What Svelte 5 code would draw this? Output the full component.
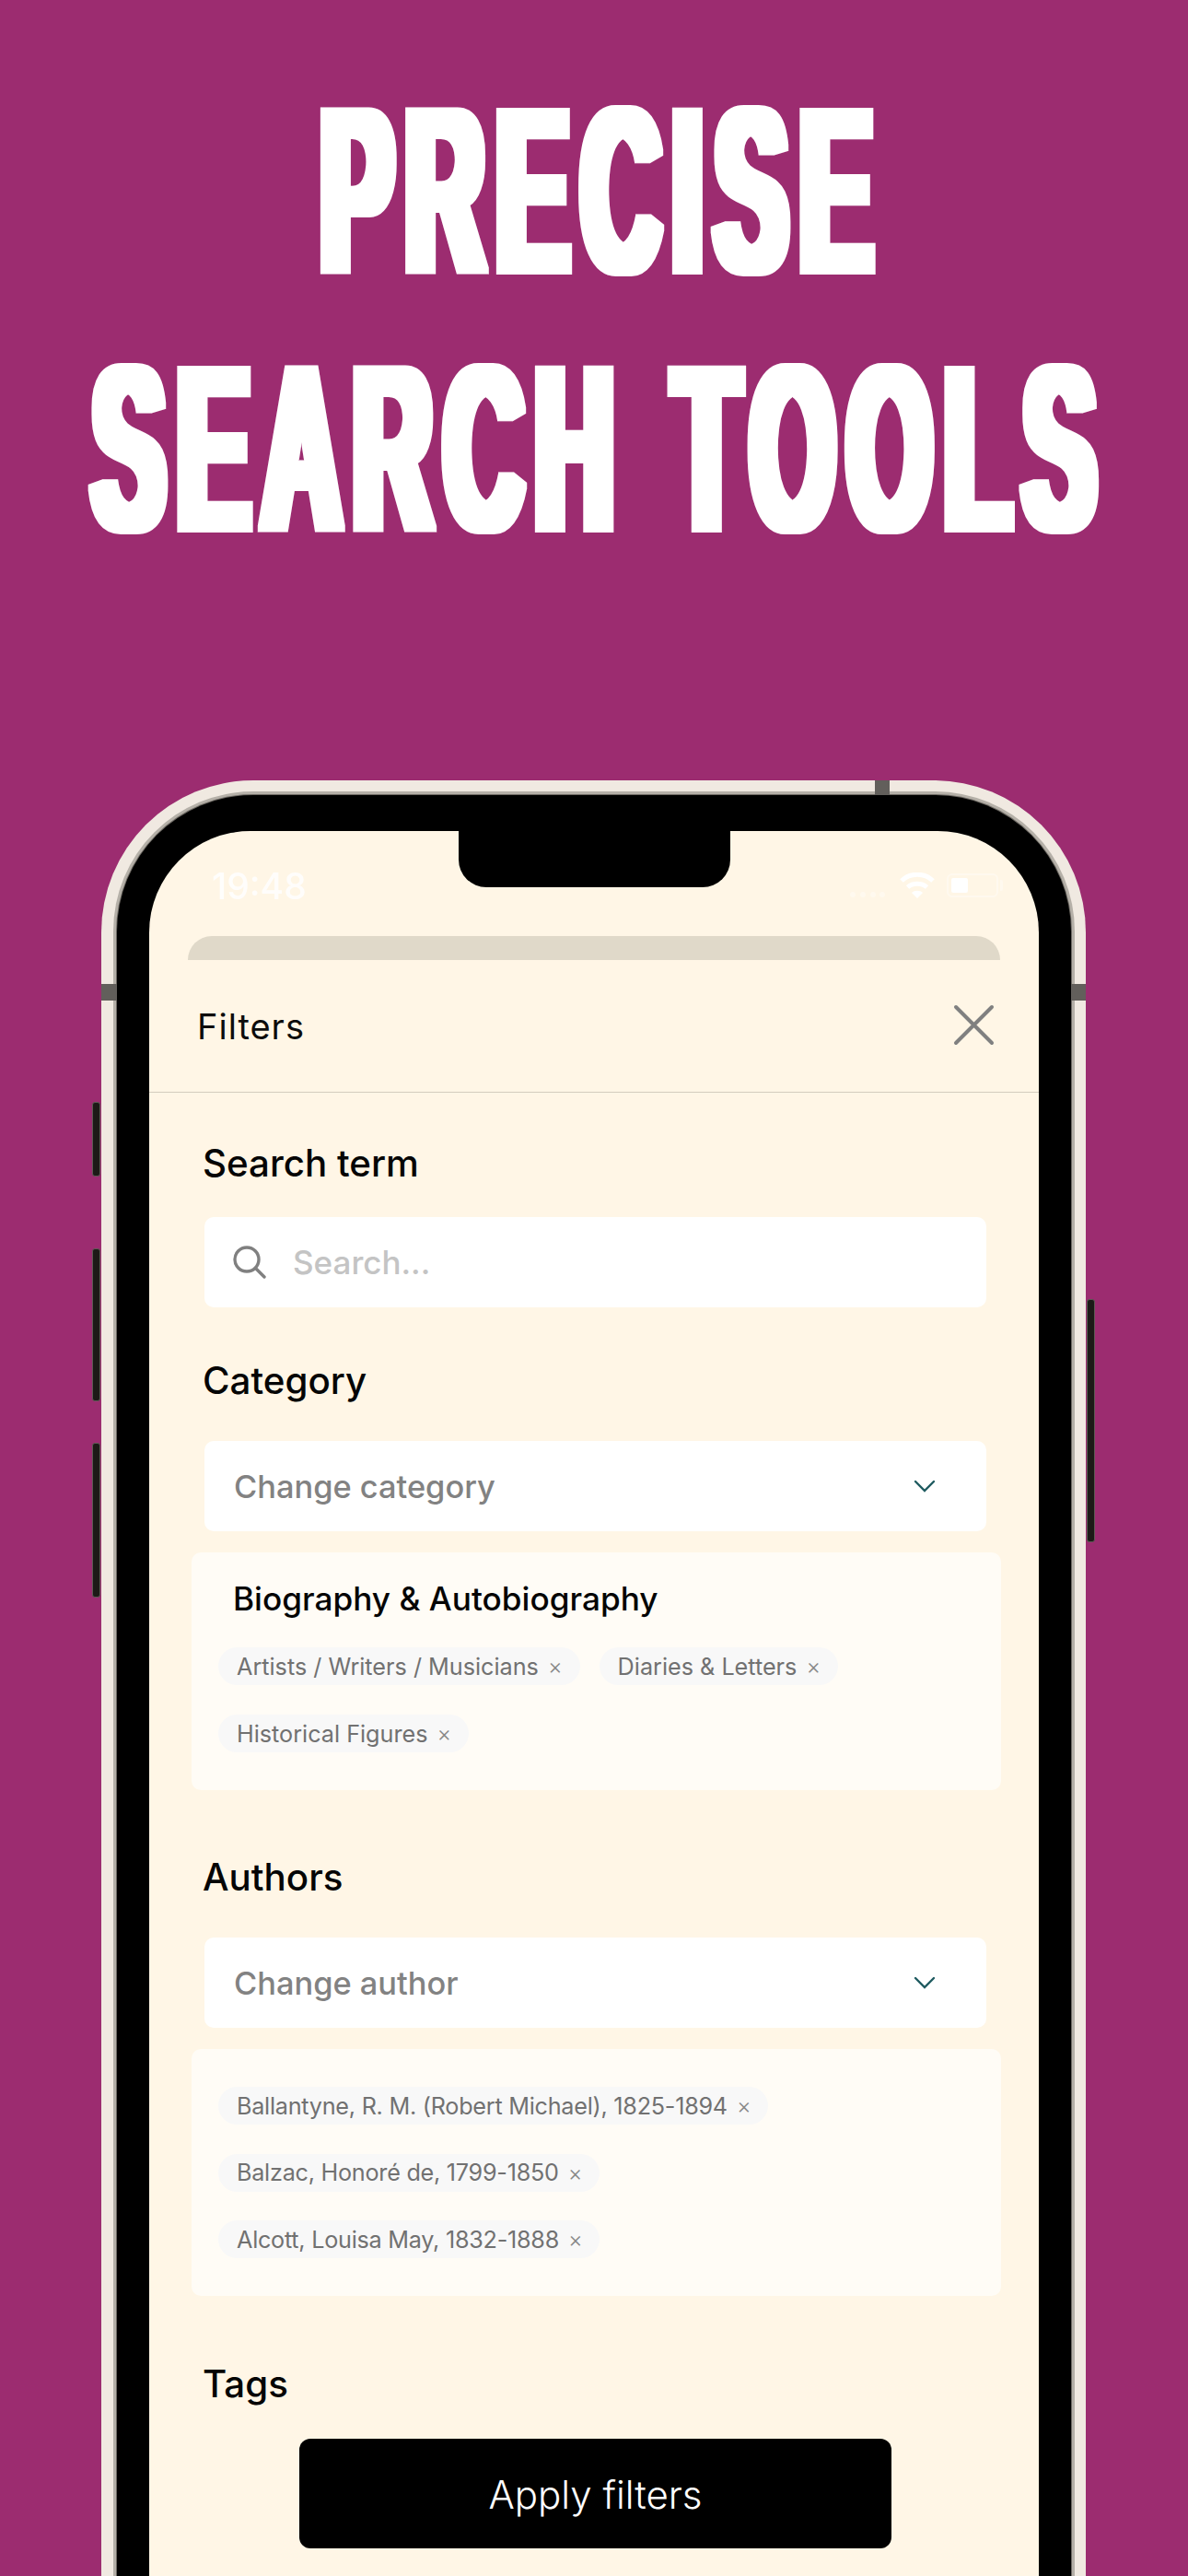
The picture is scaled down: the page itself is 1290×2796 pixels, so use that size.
<script>
  const categoryChips = ["Artists / Writers / Musicians", "Diaries & Letters", "Historical Figures"];
  const authorChips = [
    "Ballantyne, R. M. (Robert Michael), 1825-1894",
    "Balzac, Honoré de, 1799-1850",
    "Alcott, Louisa May, 1832-1888"
  ];
</script>

<div class="page">
  <!-- widens the stems of the squeezed headline, see .line -->
  <svg class="defs" width="0" height="0">
    <filter id="fatten" x="-5%" y="-5%" width="110%" height="110%">
      <feMorphology operator="dilate" radius="17 2.5" />
    </filter>
  </svg>

  <h1 class="headline">
    <span class="line line-a">PRECISE</span>
    <span class="line">SEARCH TOOLS</span>
  </h1>

  <div class="phone">
    <span class="side side-mute"></span>
    <span class="side side-up"></span>
    <span class="side side-down"></span>
    <span class="side side-power"></span>
    <span class="band band-left"></span>
    <span class="band band-right"></span>
    <span class="band band-top"></span>

    <div class="bezel">
      <div class="screen">
        <div class="notch"></div>

        <div class="status">
          <span class="time">19:48</span>
          <div class="status-icons">
            <svg class="signal" width="40" height="28" viewBox="0 0 40 28">
              <circle cx="4" cy="24" r="3" fill="#fff" opacity=".35" />
              <circle cx="15" cy="24" r="3" fill="#fff" opacity=".35" />
              <circle cx="26" cy="24" r="3" fill="#fff" opacity=".35" />
              <circle cx="36" cy="24" r="3" fill="#fff" opacity=".35" />
            </svg>
            <svg class="wifi" width="38" height="28" viewBox="0 0 38 28" fill="none" stroke="#fff" stroke-width="5">
              <path d="M2 9C11 0 27 0 36 9" />
              <path d="M8.500 16C14 11 24 11 29.500 16" />
              <path d="M19 28l-6-6c3-3 9-3 12 0z" fill="#fff" stroke="none" />
            </svg>
            <div class="battery"><span class="battery-fill"></span></div>
          </div>
        </div>

        <div class="sheet-back"></div>

        <div class="sheet-head">
          <span class="sheet-title">Filters</span>
          <svg class="close" width="47" height="47" viewBox="0 0 47 47" fill="none" stroke="#808080" stroke-width="4" stroke-linecap="round">
            <path d="M4 4l39 39M43 4L4 43" />
          </svg>
        </div>

        <div class="form">
          <h2 class="label first">Search term</h2>
          <div class="field">
            <svg class="search-icon" width="36" height="36" viewBox="0 0 36 36" fill="none" stroke="#808080" stroke-width="3.4" stroke-linecap="round">
              <circle cx="15" cy="15" r="13" />
              <path d="M24.500 24.500L34 34" />
            </svg>
            <span class="placeholder">Search...</span>
          </div>

          <h2 class="label">Category</h2>
          <div class="field select">
            <span class="select-text">Change category</span>
            <svg width="24" height="14" viewBox="0 0 24 14" fill="none" stroke="#1f5b60" stroke-width="2.4" stroke-linecap="round">
              <path d="M2 2l10 10L22 2" />
            </svg>
          </div>

          <div class="panel panel-category">
            <div class="panel-title">Biography &amp; Autobiography</div>
            <div class="chips">
              {#each categoryChips as chip}
                <span class="chip">{chip}<span class="chip-x">×</span></span>
              {/each}
            </div>
          </div>

          <h2 class="label authors">Authors</h2>
          <div class="field select">
            <span class="select-text">Change author</span>
            <svg width="24" height="14" viewBox="0 0 24 14" fill="none" stroke="#1f5b60" stroke-width="2.4" stroke-linecap="round">
              <path d="M2 2l10 10L22 2" />
            </svg>
          </div>

          <div class="panel panel-authors">
            <div class="chips">
              {#each authorChips as chip}
                <span class="chip">{chip}<span class="chip-x">×</span></span>
              {/each}
            </div>
          </div>

          <h2 class="label tags">Tags</h2>
        </div>

        <button class="apply">Apply filters</button>
      </div>
    </div>
  </div>
</div>

<style>
  :global(body) {
    margin: 0;
    background: #9c2c70;
  }

  .page {
    width: 1290px;
    height: 2796px;
    overflow: hidden;
    background: #9c2c70;
    font-family: Inter, "Noto Sans", sans-serif;
    display: flex;
    flex-direction: column;
  }

  .defs {
    position: absolute;
  }

  .headline {
    margin: 0;
    height: 847px;
    flex: none;
    box-sizing: border-box;
    padding-top: 67px;
    display: flex;
    flex-direction: column;
    align-items: center;
    font-family: "Liberation Sans", sans-serif;
    font-weight: 700;
    color: #fff;
  }

  /* no condensed display face installed: squeeze Liberation and fatten the stems sideways */
  .line {
    white-space: nowrap;
    font-size: 254px;
    line-height: 280px;
    letter-spacing: 29px;
    word-spacing: 11px;
    padding-left: 28px;
    filter: url(#fatten);
    transform: scaleX(0.465);
  }

  .line-a {
    padding-left: 40px;
  }

  .phone {
    position: relative;
    width: 1069px;
    margin-left: 110px;
    flex: 1;
    box-sizing: border-box;
    padding: 16px 16px 0 17px;
    background: #f0e9e1;
    border-radius: 165px 165px 0 0;
  }

  .side {
    position: absolute;
    left: -10px;
    width: 9px;
    background: #1c1a17;
    border: 1px solid #5e5a55;
    box-sizing: border-box;
    border-radius: 3px;
  }

  .side-mute {
    top: 349px;
    height: 81px;
  }

  .side-up {
    top: 508px;
    height: 166px;
  }

  .side-down {
    top: 719px;
    height: 168px;
  }

  .side-power {
    left: auto;
    right: -10px;
    top: 563px;
    height: 264px;
  }

  .band {
    position: absolute;
    z-index: 1;
    background: #625f5b;
  }

  .band-left {
    left: 0;
    top: 221px;
    width: 17px;
    height: 18px;
  }

  .band-right {
    right: 0;
    top: 221px;
    width: 16px;
    height: 18px;
  }

  .band-top {
    top: 0;
    left: 840px;
    width: 16px;
    height: 16px;
  }

  .bezel {
    position: relative;
    height: 100%;
    box-sizing: border-box;
    padding: 39px 35px 0;
    background: #000;
    border-radius: 148px 148px 0 0;
    box-shadow: 0 0 0 1px #6e6a64, 0 0 0 4px #b5b0a8;
  }

  .screen {
    position: relative;
    height: 100%;
    background: #fff6e6;
    border-radius: 110px 110px 0 0;
    overflow: hidden;
  }

  .notch {
    position: absolute;
    top: -1px;
    left: 336px;
    width: 295px;
    height: 62px;
    background: #000;
    border-radius: 0 0 30px 30px;
  }

  .status {
    height: 114px;
    box-sizing: border-box;
    padding: 36px 38px 0 68px;
    display: flex;
    justify-content: space-between;
    align-items: flex-start;
  }

  .time {
    font-size: 39px;
    line-height: 48px;
    font-weight: 500;
    color: #fff;
    opacity: 0.85;
  }

  .status-icons {
    display: flex;
    align-items: center;
    padding-top: 9px;
  }

  .signal {
    margin-right: 15px;
  }

  .wifi {
    margin-right: 13px;
  }

  .battery {
    position: relative;
    width: 56px;
    height: 26px;
    margin-right: 6px;
    box-sizing: border-box;
    padding: 3px;
    border: 2px solid rgba(255, 255, 255, 0.35);
    border-radius: 6px;
  }

  .battery::after {
    content: "";
    position: absolute;
    top: 5px;
    right: -7px;
    width: 3px;
    height: 12px;
    background: rgba(255, 255, 255, 0.35);
    border-radius: 0 2px 2px 0;
  }

  .battery-fill {
    display: block;
    width: 18px;
    height: 100%;
    background: #fff;
    border-radius: 2px;
  }

  .sheet-back {
    height: 26px;
    margin: 0 42px;
    background: #e0d9c9;
    border-radius: 28px 28px 0 0;
  }

  .sheet-head {
    height: 144px;
    box-sizing: border-box;
    padding: 0 47px 2px 52px;
    display: flex;
    justify-content: space-between;
    align-items: center;
    border-bottom: 1px solid #d3ccbe;
  }

  .sheet-title {
    padding-top: 2px;
    font-size: 38px;
    letter-spacing: 1px;
    color: #0c0c0c;
  }

  .form {
    padding: 0 57px 0 60px;
  }

  .label {
    margin: 0 0 0 -2px;
    font-size: 40.3px;
    line-height: 44px;
    font-weight: 500;
    color: #050505;
  }

  .first {
    margin-top: 55px;
    margin-bottom: 36px;
  }

  .field {
    height: 98px;
    box-sizing: border-box;
    background: #fff;
    border-radius: 10px;
    display: flex;
    align-items: center;
    padding: 0 31px;
    margin-bottom: 58px;
  }

  .search-icon {
    margin-right: 29px;
  }

  .placeholder {
    font-size: 35px;
    font-weight: 500;
    color: #c4c4c4;
  }

  .select {
    justify-content: space-between;
    padding: 0 55px 0 32px;
    margin-bottom: 23px;
  }

  .select-text {
    font-size: 34.4px;
    font-weight: 500;
    color: #828282;
  }

  .label + .select {
    margin-top: 43px;
  }

  .panel {
    margin: 0 -16px 0 -14px;
    background: #fffcf6;
    border-radius: 10px;
    box-sizing: border-box;
    padding: 0 29px;
  }

  .panel-category {
    height: 258px;
    padding-top: 28px;
  }

  .panel-authors {
    height: 268px;
    padding-top: 41px;
  }

  .panel-title {
    font-size: 35.2px;
    line-height: 44px;
    font-weight: 500;
    color: #050505;
    padding-left: 16px;
    margin-bottom: 31px;
  }

  .chips {
    display: flex;
    flex-wrap: wrap;
    gap: 32px 21px;
  }

  .chip {
    height: 41px;
    box-sizing: border-box;
    padding: 0 19px 0 20px;
    display: inline-flex;
    align-items: center;
    background: #f8f8f8;
    border-radius: 21px;
    font-size: 25.2px;
    color: #717171;
  }

  .chip-x {
    margin-left: 10px;
    font-size: 24px;
    font-weight: 300;
    color: #888;
  }

  .panel-authors .chips {
    flex-direction: column;
    align-items: flex-start;
    row-gap: 31.5px;
  }

  .panel-authors .chip {
    letter-spacing: -0.25px;
  }

  .authors {
    margin-top: 73px;
  }

  .tags {
    margin-top: 74px;
  }

  .apply {
    position: absolute;
    left: 163px;
    top: 1745px;
    width: 643px;
    height: 119px;
    padding-top: 2px;
    border: none;
    border-radius: 12px;
    background: #000;
    color: #fff;
    font-family: inherit;
    font-size: 42px;
    font-weight: 300;
  }
</style>
